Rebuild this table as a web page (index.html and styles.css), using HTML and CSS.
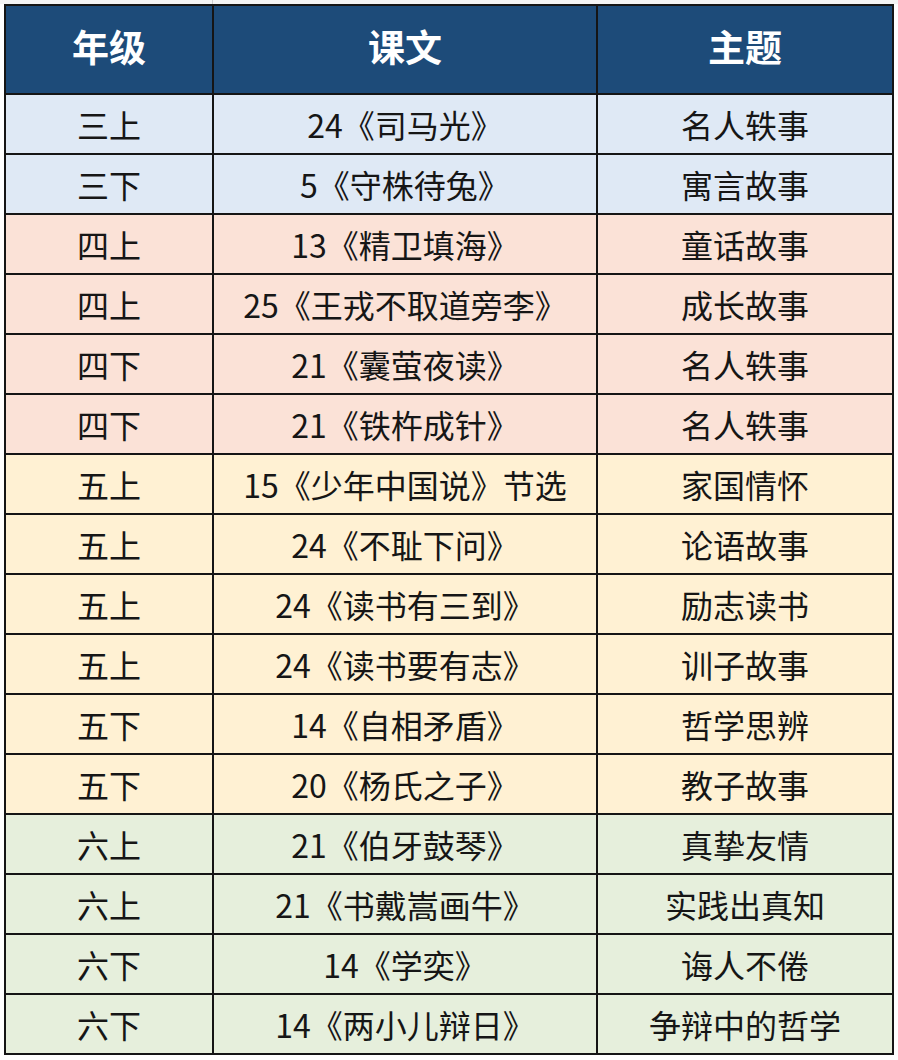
FILE: index.html
```html
<!DOCTYPE html>
<html lang="zh-CN">
<head>
<meta charset="utf-8">
<title>课文主题</title>
<link rel="stylesheet" href="styles.css">
</head>
<body>
<div class="topstrip"><span class="gridline"></span></div>
<div class="table">
  <div class="cell head">年级</div><div class="cell head">课文</div><div class="cell head">主题</div>

  <div class="cell blue">三上</div><div class="cell blue">24《司马光》</div><div class="cell blue">名人轶事</div>
  <div class="cell blue">三下</div><div class="cell blue">5《守株待兔》</div><div class="cell blue">寓言故事</div>

  <div class="cell pink">四上</div><div class="cell pink">13《精卫填海》</div><div class="cell pink">童话故事</div>
  <div class="cell pink">四上</div><div class="cell pink">25《王戎不取道旁李》</div><div class="cell pink">成长故事</div>
  <div class="cell pink">四下</div><div class="cell pink">21《囊萤夜读》</div><div class="cell pink">名人轶事</div>
  <div class="cell pink">四下</div><div class="cell pink">21《铁杵成针》</div><div class="cell pink">名人轶事</div>

  <div class="cell yellow">五上</div><div class="cell yellow">15《少年中国说》节选</div><div class="cell yellow">家国情怀</div>
  <div class="cell yellow">五上</div><div class="cell yellow">24《不耻下问》</div><div class="cell yellow">论语故事</div>
  <div class="cell yellow">五上</div><div class="cell yellow">24《读书有三到》</div><div class="cell yellow">励志读书</div>
  <div class="cell yellow">五上</div><div class="cell yellow">24《读书要有志》</div><div class="cell yellow">训子故事</div>
  <div class="cell yellow">五下</div><div class="cell yellow">14《自相矛盾》</div><div class="cell yellow">哲学思辨</div>
  <div class="cell yellow">五下</div><div class="cell yellow">20《杨氏之子》</div><div class="cell yellow">教子故事</div>

  <div class="cell green">六上</div><div class="cell green">21《伯牙鼓琴》</div><div class="cell green">真挚友情</div>
  <div class="cell green">六上</div><div class="cell green">21《书戴嵩画牛》</div><div class="cell green">实践出真知</div>
  <div class="cell green">六下</div><div class="cell green">14《学奕》</div><div class="cell green">诲人不倦</div>
  <div class="cell green">六下</div><div class="cell green">14《两小儿辩日》</div><div class="cell green">争辩中的哲学</div>
</div>
</body>
</html>
```

FILE: styles.css
```css
html, body {
  margin: 0;
  padding: 0;
  background: #ffffff;
}
body {
  font-family: "Noto Sans CJK SC", "Noto Sans", sans-serif;
  color: #161616;
}
.topstrip {
  height: 4px;
  background: #f4f4f4;
  position: relative;
}
.gridline {
  position: absolute;
  left: 212px;
  top: 0;
  width: 1px;
  height: 4px;
  background: #cfcfcf;
}
.table {
  margin-left: 4px;
  width: 886px;
  padding: 2px;
  background: #151515;
  display: grid;
  grid-template-columns: 206px 382px 294px;
  grid-template-rows: 87px repeat(16, 58px);
  gap: 2px;
}
.cell {
  display: flex;
  align-items: center;
  justify-content: center;
  font-size: 32px;
  line-height: 1;
  white-space: nowrap;
}
.head {
  background: #1d4b79;
  color: #ffffff;
  font-weight: 700;
  font-size: 37px;
  padding-bottom: 6px;
  box-sizing: border-box;
}
.blue { background: #dfe9f5; }
.pink { background: #fbe2d7; }
.yellow { background: #fff1d3; }
.green { background: #e6efdc; }
```
